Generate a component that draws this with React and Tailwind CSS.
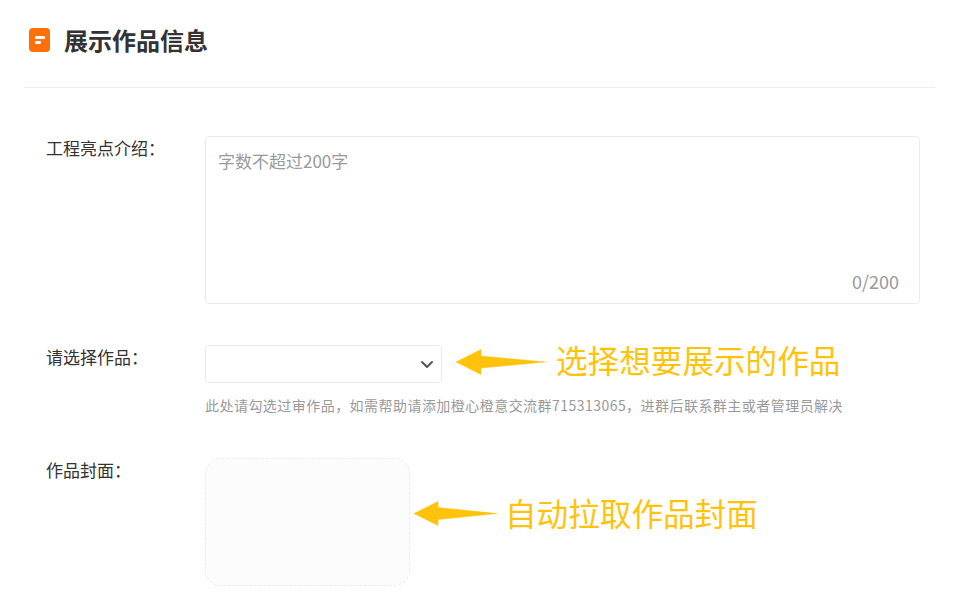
const font = { fontFamily: '"Noto Sans CJK SC", "Liberation Sans", sans-serif' };

function Arrow({ w, h }) {
  return (
    <svg width={w} height={h} viewBox={`0 0 ${w} ${h}`} className="shrink-0">
      <polygon points={`0,${h / 2} ${h - 1},0.5 ${h - 1},${h / 2 - 6} ${w},${h / 2} ${h - 1},${h / 2 + 6} ${h - 1},${h - 0.5}`} fill="#ffc30b" stroke="#ffc30b" strokeWidth="0.5" strokeLinejoin="round" />
    </svg>
  );
}

export default function App() {
  return (
    <div className="w-[958px] h-[615px] overflow-hidden bg-white" style={font}>
      <div className="mx-[24px] w-[911px] h-[88px] border-b border-[#eeeeee] flex items-center pl-[5px] pb-[7px]">
        <div className="w-[21px] h-[24px] rounded-[4px] bg-[#ff7108] flex flex-col justify-center gap-[2px] pl-[6px]">
          <div className="w-[10px] h-[3px] rounded-[1px] bg-white" />
          <div className="w-[6px] h-[3px] rounded-[1px] bg-white" />
        </div>
        <h1 className="ml-[14px] text-[24px] leading-[32px] font-bold text-[#333333]">展示作品信息</h1>
      </div>

      <div className="pt-[48px] pl-[46px] pr-[38px]">
        <div className="flex">
          <label className="w-[159px] shrink-0 text-[17px] leading-[24px] text-[#333333]">工程亮点介绍：</label>
          <div className="relative w-[715px] h-[168px] rounded-[4px] border border-[#ebebeb] px-[12px] py-[12px] text-[17px] leading-[24px] text-[#999999]">
            字数不超过200字
            <span className="absolute right-[20px] bottom-[10px] text-[18px] text-[#999999]">0/200</span>
          </div>
        </div>

        <div className="flex mt-[41px]">
          <label className="w-[159px] shrink-0 text-[17px] leading-[24px] text-[#333333]">请选择作品：</label>
          <div>
            <div className="flex items-start h-[38px]">
              <div className="w-[237px] h-[38px] rounded-[4px] border border-[#ebebeb] flex items-center justify-end pr-[7px]">
                <svg width="14" height="14" viewBox="0 0 14 14" fill="none" stroke="#555555" strokeWidth="2" strokeLinecap="round" strokeLinejoin="round">
                  <path d="M2 5l5 5 5-5" />
                </svg>
              </div>
              <div className="ml-[14px] mt-[4px]"><Arrow w={89} h={26} /></div>
              <span className="ml-[11px] mt-[-5px] text-[31.6px] leading-[38px] text-[#ffc30b]">选择想要展示的作品</span>
            </div>
            <p className="mt-[12px] text-[14px] leading-[20px] tracking-[0.46px] text-[#999999] whitespace-nowrap">此处请勾选过审作品，如需帮助请添加橙心橙意交流群715313065，进群后联系群主或者管理员解决</p>
          </div>
        </div>

        <div className="flex mt-[43px]">
          <label className="w-[159px] shrink-0 text-[17px] leading-[24px] text-[#333333]">作品封面：</label>
          <div className="flex items-start">
            <div className="w-[205px] h-[128px] rounded-[16px] border border-dashed border-[#ececec] bg-[#fcfcfc]" />
            <div className="ml-[4px] mt-[43px]"><Arrow w={83} h={25} /></div>
            <span className="ml-[8px] mt-[35px] text-[31.6px] leading-[38px] text-[#ffc30b]">自动拉取作品封面</span>
          </div>
        </div>
      </div>
    </div>
  );
}
